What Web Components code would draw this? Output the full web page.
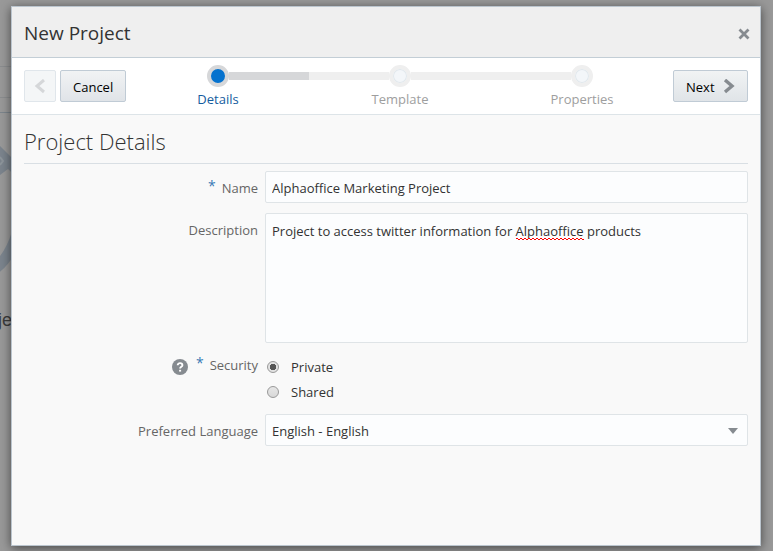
<!DOCTYPE html>
<html lang="en">
<head>
<meta charset="utf-8">
<title>New Project</title>
<style>
  html, body { height: 100%; }
  body { margin: 0; overflow: hidden; background: #999; font: 13px/20px "Open Sans", "Noto Sans", sans-serif; color: #333; }
</style>
</head>
<body>
<project-page>
  <modal-dialog heading="New Project">
    <wizard-bar slot="bar"></wizard-bar>
    <project-form></project-form>
  </modal-dialog>
</project-page>
<script>
class Base extends HTMLElement {
  constructor() {
    super();
    this.attachShadow({ mode: "open" }).innerHTML = `<style>*{box-sizing:border-box}</style>` + this.view();
  }
}

customElements.define("project-page", class extends Base {
  view() { return `
    <style>
      :host { display: block; position: relative; box-sizing: border-box; height: 100vh; padding: 6px 12px 5px 11px; overflow: hidden; }
      .behind { position: absolute; inset: 0; overflow: hidden; }
      .behind svg { display: block; }
      .caption { position: absolute; left: -2px; top: 308px; font: 18px/24px "Liberation Sans", Arial, sans-serif; color: #3c3c3c; }
      .layer { position: relative; height: 100%; }
    </style>
    <div class="behind">
      <svg width="40" height="300" aria-hidden="true">
        <path d="M0 66.5H40M0 97.5H40" stroke="#8b8d8f"/><path d="M0 112.5H40" stroke="#7c858c"/>
        <path d="M0 146L22 168V182L8 169L0 175Z" fill="#7b848d"/>
        <path d="M0 157L3 161L0 165" fill="none" stroke="#8d959b" stroke-width="2"/>
        <path d="M-4 268C6 260 12 250 17 234" fill="none" stroke="#7b848d" stroke-width="11"/>
      </svg>
      <span class="caption">je</span>
    </div>
    <div class="layer"><slot></slot></div>`; }
});

customElements.define("modal-dialog", class extends Base {
  connectedCallback() { this.shadowRoot.querySelector("h1").textContent = this.getAttribute("heading"); }
  view() { return `
    <style>
      :host { display: flex; flex-direction: column; box-sizing: border-box; height: 100%; border: 1px solid #bbc5ce; background: #f9f9f9; box-shadow: 0 2px 10px rgba(0,0,0,.55); }
      header { display: flex; align-items: center; justify-content: space-between; height: 51px; padding: 2px 9px 0 12px; background: #efefef; border-bottom: 1px solid #c3ced6; }
      h1 { margin: 0; font-size: 19px; line-height: 28px; font-weight: 400; }
      button { display: grid; padding: 2px 1px 0; border: 0; background: none; }
      main { flex: 1; padding: 12px; }
    </style>
    <header><h1></h1>
      <button aria-label="Close"><svg width="12" height="12" viewBox="0 0 12 12"><path d="M1.5 1.5L10.5 10.5M10.5 1.5L1.5 10.5" stroke="#868b90" stroke-width="2.8"/></svg></button>
    </header>
    <slot name="bar"></slot>
    <main><slot></slot></main>`; }
});

customElements.define("push-button", class extends Base {
  connectedCallback() { this.shadowRoot.querySelector("button").disabled = this.hasAttribute("disabled"); }
  view() { return `
    <style>
      :host { display: block; }
      button { display: flex; align-items: center; justify-content: center; gap: 8px; height: 32px; min-width: 32px; padding: 2px 12px 0; font: inherit; color: #000; border: 1px solid #c0cbd5; border-radius: 2px; background: linear-gradient(#f1f3f4, #e0e4e8); }
      button:disabled { padding: 2px 0 0; border-color: #e0e6eb; background: #f4f6f7; }
      ::slotted(svg) { display: block; }
    </style>
    <button><slot></slot></button>`; }
});

customElements.define("wizard-bar", class extends Base {
  view() { return `
    <style>
      :host { display: grid; grid-template-columns: 103px 1fr 75px; align-items: center; box-sizing: border-box; height: 57px; padding: 0 12px; background: #fff; border-bottom: 1px solid #dde4e8; }
      .left { display: flex; gap: 4px; }
      step-train { justify-self: center; width: 546px; max-width: 100%; padding-top: 2px; }
    </style>
    <div class="left">
      <push-button disabled><svg width="12" height="16" viewBox="0 0 12 16" aria-label="Back"><path d="M10 1L3 7L10 13" fill="none" stroke="#d5d7d9" stroke-width="3"/></svg></push-button>
      <push-button>Cancel</push-button>
    </div>
    <step-train></step-train>
    <push-button>Next<svg width="12" height="16" viewBox="0 0 12 16" aria-hidden="true"><path d="M2 1L9 7L2 13" fill="none" stroke="#868b90" stroke-width="3.4"/></svg></push-button>`; }
});

customElements.define("step-train", class extends Base {
  view() { return `
    <style>
      :host { display: block; }
      ol { display: grid; grid-template-columns: repeat(3, 1fr); margin: 0; padding: 0; list-style: none; }
      li { display: grid; grid-template-columns: 1fr 22px 1fr; align-items: center; row-gap: 2px; color: #9e9e9e; text-align: center; }
      li::before, li::after { content: ""; height: 8px; background: #efefef; }
      li:first-child::before, li:last-child::after { background: none; }
      li.on::after { background: #d6d7d9; }
      li.on { color: #145c9e; }
      i { grid-row: 1; height: 22px; border: 4px solid #efefef; border-radius: 50%; background: #f3f6f9; box-shadow: inset 0 0 0 1px #e0e7ec; }
      li.on i { border-color: #d6d7d9; background: #0572ce; box-shadow: none; }
      li::before, li::after { grid-row: 1; }
      li::before { grid-column: 1; } i { grid-column: 2; } li::after { grid-column: 3; }
      span { grid-column: 1 / -1; }
    </style>
    <ol><li class="on" aria-current="step"><i></i><span>Details</span></li><li><i></i><span>Template</span></li><li><i></i><span>Properties</span></li></ol>`; }
});

customElements.define("project-form", class extends Base {
  view() { return `
    <style>
      :host { display: block; }
      h2 { margin: 0 0 7px; padding-bottom: 8px; font-size: 22px; line-height: 28px; font-weight: 300; border-bottom: 1px solid #d9dfe4; }
      form { display: grid; grid-template-columns: 234px 1fr; column-gap: 7px; row-gap: 10px; }
      .label { display: flex; align-items: flex-start; justify-content: flex-end; gap: 6px; padding-top: 7px; color: #666; }
      .star { color: #3a7ab5; line-height: 16px; font-size: 14px; }
      input[type=text], textarea, select { display: block; width: 100%; height: 32px; margin: 0; padding: 2px 6px 0; font: inherit; color: #333; background: #fcfdfe; border: 1px solid #dfe4e7; border-radius: 2px; outline: 0; }
      textarea { height: 130px; padding-top: 7px; resize: none; }
      .area, .pick { position: relative; }
      .squiggle { position: absolute; top: 24px; height: 3px; pointer-events: none; }
      select { appearance: none; }
      .pick svg { position: absolute; right: 10px; top: 14px; pointer-events: none; }
      .radios { display: grid; row-gap: 5px; padding: 4px 0 2px; }
      .radios label { display: flex; align-items: center; gap: 12px; padding-left: 2px; }
      input[type=radio] { appearance: none; width: 12px; height: 12px; margin: 0; border: 1px solid #999; border-radius: 50%; background: linear-gradient(#e6e6e6, #d8d8d8); }
      input[type=radio]:checked { background: radial-gradient(circle, #555 0 3px, #e2e2e2 3.5px); }
      .security { padding-top: 2px; }
      .help { display: grid; margin-top: 4px; padding: 0; border: 0; background: none; }
      .help + .star { margin-left: 2px; }
    </style>
    <h2>Project Details</h2>
    <form>
      <label class="label" for="name"><span class="star">*</span>Name</label>
      <input type="text" id="name" value="Alphaoffice Marketing Project">
      <label class="label" for="desc">Description</label>
      <div class="area"><textarea id="desc" spellcheck="false">Project to access twitter information for Alphaoffice products</textarea>
        <svg class="squiggle" aria-hidden="true"><defs><pattern id="w" width="4" height="3" patternUnits="userSpaceOnUse"><path d="M-1 3L1 1L3 3L5 1" fill="none" stroke="#f00"/></pattern></defs><rect width="100%" height="3" fill="url(#w)"/></svg></div>
      <div class="label security">
        <button class="help" type="button" aria-label="Help"><svg width="16" height="16" viewBox="0 0 16 16"><circle cx="8" cy="8" r="8" fill="#868b90"/><path d="M5.7 6.3C5.7 3.4 10.4 3.5 10.4 6.2C10.4 7.9 8.1 7.8 8.1 9.6" fill="none" stroke="#fff" stroke-width="1.9"/><path d="M7.1 10.8H9.1V12.6H7.1Z" fill="#fff"/></svg></button>
        <span class="star">*</span><span id="sec">Security</span></div>
      <div class="radios" role="radiogroup" aria-labelledby="sec">
        <label><input type="radio" name="security" checked>Private</label>
        <label><input type="radio" name="security">Shared</label>
      </div>
      <label class="label" for="lang">Preferred Language</label>
      <div class="pick"><select id="lang"><option>English - English</option></select><svg width="10" height="7" aria-hidden="true"><path d="M0 0H10L5 6Z" fill="#868b90"/></svg></div>
    </form>`; }
  connectedCallback() {
    const area = this.shadowRoot.querySelector("textarea");
    const mark = this.shadowRoot.querySelector(".squiggle");
    const pen = document.createElement("canvas").getContext("2d");
    const css = getComputedStyle(area);
    pen.font = `${css.fontSize} ${css.fontFamily}`;
    const word = "Alphaoffice";
    const before = area.value.slice(0, area.value.indexOf(word));
    mark.style.left = Math.round(7 + pen.measureText(before).width) + "px";
    mark.style.width = Math.round(pen.measureText(word).width) + "px";
  }
});
</script>
</body>
</html>
